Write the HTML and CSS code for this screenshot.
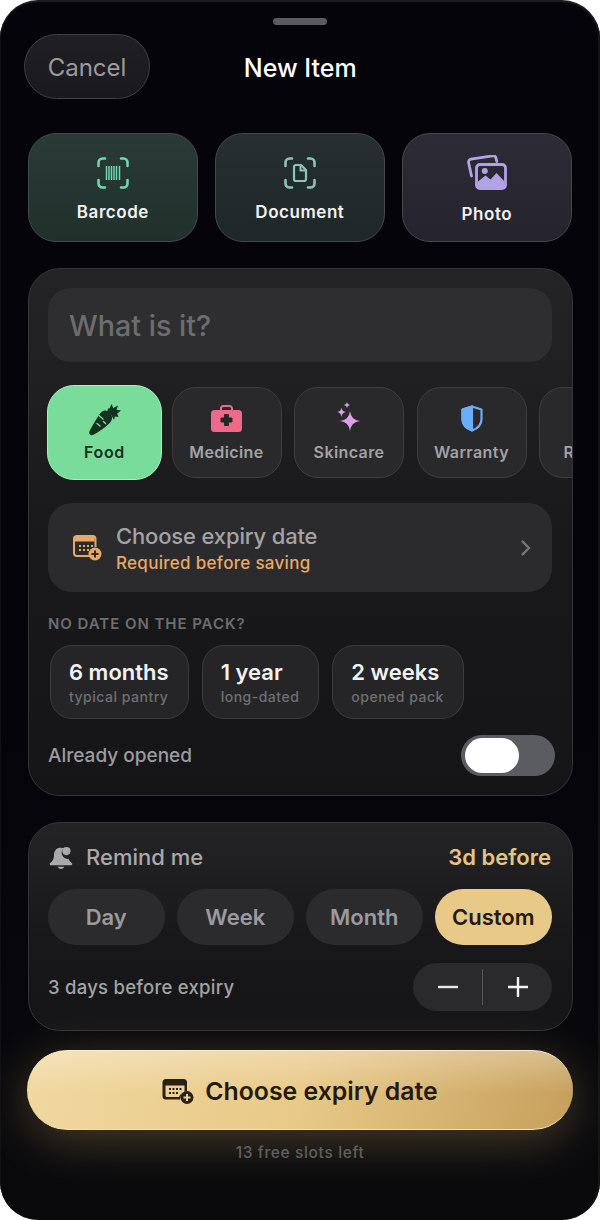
FILE: index.html
```html
<!DOCTYPE html>
<html lang="en">
<head>
  <meta charset="UTF-8" />
  <meta name="viewport" content="width=device-width, initial-scale=1.0" />
  <title>New Item</title>
  <link rel="stylesheet" href="styles.css">
</head>
<body>
  <div class="sheet">
    <div class="handle"></div>

    <header class="topbar">
      <button class="cancel">Cancel</button>
      <h1>New Item</h1>
      <span class="topbar-spacer"></span>
    </header>

    <div class="quick">
      <button class="quick-card green">
        <svg class="quick-icon" width="34" height="34" viewBox="0 0 34 34" fill="none" stroke="#6fd8b0" stroke-width="2.6" stroke-linecap="round" stroke-linejoin="round">
          <path d="M9 2.500H6.500a4 4 0 0 0-4 4V10M25 2.500h2.500a4 4 0 0 1 4 4V10M9 31.500H6.500a4 4 0 0 1-4-4V24M25 31.500h2.500a4 4 0 0 0 4-4V24"/>
          <path stroke-width="1.5" stroke-linecap="butt" d="M10.500 10v14M13 10v14M15.500 10v14M18 10v14M20.500 10v14M23.500 10v14"/>
        </svg>
        <span>Barcode</span>
      </button>
      <button class="quick-card teal">
        <svg class="quick-icon" width="34" height="34" viewBox="0 0 34 34" fill="none" stroke="#8ac5bb" stroke-width="2.600" stroke-linecap="round" stroke-linejoin="round">
          <path d="M9 2.500H6.500a4 4 0 0 0-4 4V10M25 2.500h2.500a4 4 0 0 1 4 4V10M9 31.500H6.500a4 4 0 0 1-4-4V24M25 31.500h2.500a4 4 0 0 0 4-4V24"/>
          <path stroke-width="2.200" d="M11 11a2 2 0 0 1 2-2h5l5 5v9a2 2 0 0 1-2 2h-8a2 2 0 0 1-2-2z"/>
          <path stroke-width="2" d="M17.500 9.500v5h5"/>
        </svg>
        <span>Document</span>
      </button>
      <button class="quick-card violet">
        <svg class="photo-icon" width="42" height="36" viewBox="0 0 42 36" fill="none">
          <path d="M5.500 21 2.600 7.800a3 3 0 0 1 2.300-3.600L26.500.9a3 3 0 0 1 3.500 2.200l.8 3.400" stroke="#b3a2e6" stroke-width="2.800" stroke-linecap="round"/>
          <rect x="10.500" y="9.500" width="29" height="24" rx="3.500" stroke="#b3a2e6" stroke-width="2.800"/>
          <path d="M12 31.500v-5l7.500-6 5 4 6-6.500 7.500 8v5.500a1.500 1.500 0 0 1-1.500 1.500h-23a1.500 1.500 0 0 1-1.500-1.500z" fill="#b3a2e6"/>
          <circle cx="18.800" cy="16" r="3" fill="#b3a2e6"/>
        </svg>
        <span>Photo</span>
      </button>
    </div>

    <section class="panel details">
      <div class="name-input">What is it?</div>

      <div class="cats">
        <button class="cat selected">
          <svg width="34" height="33" viewBox="0 0 34 33" fill="#14321f">
            <path d="M2.800 32C1 31 .8 29.500 1.800 27.500 5 21.500 8.500 15.500 12 10.500 13.500 8.500 15.500 7 18 7.500l4 2.500 2 3.500c.5 2.500-.7 5-2.500 6.800C16 25.500 10 29.500 5.500 31.700c-1 .5-1.900.7-2.700.3z"/>
            <path d="M19 8.500 20.500 5l1 .5L23.500 1l1.800 4L30 2.500l-1.500 4.300L33 7.500l-3.800 3.300 1.300 3.200-3.500-.5-1 3.500-2.500-4.500-2-2z"/>
            <path d="M11 12.500l4 3.500M9 20.500l3 2.500M15.500 18.500l2 2" fill="none" stroke="#7adc9a" stroke-width="1.400" stroke-linecap="round"/>
          </svg>
          <span>Food</span>
        </button>
        <button class="cat">
          <svg width="31" height="27" viewBox="0 0 31 27">
            <path d="M10 6V3.500A2.500 2.500 0 0 1 12.500 1h6A2.500 2.500 0 0 1 21 3.500V6" fill="none" stroke="#f0688a" stroke-width="2"/>
            <rect y="5" width="31" height="22" rx="3.500" fill="#f0688a"/>
            <path d="M13.500 9.500h4v3.500H21v4h-3.500v3.500h-4V17H10v-4h3.500z" fill="#27272a" stroke="#27272a" stroke-width="1" stroke-linejoin="round"/>
          </svg>
          <span>Medicine</span>
        </button>
        <button class="cat">
          <svg width="26" height="30" viewBox="0 0 26 30" fill="#dc9de9">
            <path d="M14 9Q15 18 24 19 15 20 14 29 13 20 4 19 13 18 14 9z"/>
            <path d="M5.500 5.500Q6 9.500 10 10 6 10.500 5.500 15 5 10.500 1 10 5 9.500 5.500 5.500z"/>
            <path d="M11 0Q11.300 2.700 14 3 11.300 3.300 11 6 10.700 3.300 8 3 10.700 2.700 11 0z"/>
          </svg>
          <span>Skincare</span>
        </button>
        <button class="cat">
          <svg width="24" height="27" viewBox="0 0 24 27">
            <path d="M12 1.500 21.500 4.500v9.500c0 5.500-4 9.500-9.500 11.500C6.500 23.500 2.500 19.500 2.500 14V4.500z" fill="none" stroke="#6aaef7" stroke-width="2.200" stroke-linejoin="round"/>
            <path d="M12 1.500v24C6.500 23.500 2.500 19.500 2.500 14V4.500z" fill="#6aaef7" stroke="#6aaef7" stroke-width="2.200" stroke-linejoin="round"/>
          </svg>
          <span>Warranty</span>
        </button>
        <button class="cat">
          <svg width="24" height="27" viewBox="0 0 24 27"></svg>
          <span>Receipt</span>
        </button>
      </div>

      <button class="date-row">
        <svg class="cal" width="29" height="26" viewBox="0 0 29 26">
          <path d="M17 21H4a3 3 0 0 1-3-3V4a3 3 0 0 1 3-3h15.500a3 3 0 0 1 3 3v8" fill="none" stroke="#e8a866" stroke-width="2"/>
          <path d="M2 2h19.500v4.500H2z" fill="#e8a866"/>
          <path d="M6 10h2v2H6zM10 10h2v2h-2zM14 10h2v2h-2zM18 10h2v2h-2zM6 14h2v2H6zM10 14h2v2h-2zM14 14h2v2h-2z" fill="#e8a866"/>
          <circle cx="22" cy="19" r="6.500" fill="#e8a866"/>
          <path d="M22 15.500v7M18.500 19h7" stroke="#2a2a2d" stroke-width="2"/>
        </svg>
        <span class="date-text">
          <span class="date-title">Choose expiry date</span>
          <span class="date-sub">Required before saving</span>
        </span>
        <svg class="chevron" width="12" height="18" viewBox="0 0 12 18" fill="none" stroke="#77777b" stroke-width="2.400" stroke-linecap="round" stroke-linejoin="round">
          <path d="M2.500 2.500 9 9l-6.500 6.500"/>
        </svg>
      </button>

      <h2 class="section-label">NO DATE ON THE PACK?</h2>

      <div class="chips">
        <button class="chip"><b>6 months</b><small>typical pantry</small></button>
        <button class="chip"><b>1 year</b><small>long-dated</small></button>
        <button class="chip"><b>2 weeks</b><small>opened pack</small></button>
      </div>

      <div class="opened-row">
        <span>Already opened</span>
        <div class="toggle"><div class="thumb"></div></div>
      </div>
    </section>

    <section class="panel remind">
      <div class="remind-head">
        <svg class="bell" width="26" height="26" viewBox="0 0 24 24" fill="#a9a9ab">
          <path d="M11 3.500c-3.600.5-5.500 3.300-5.500 6.800 0 3.500-1 5.300-3.500 7.200-.8.600-.5 2 .6 2h18.800c1.100 0 1.400-1.400.6-2-1.600-1.200-2.500-2.300-3-3.800-3.600.6-7-2.900-6.300-6.500.2-1.300.8-2.500 1.700-3.300-.7-.3-2-.6-3.400-.4z"/>
          <circle cx="17" cy="6.500" r="3.800"/>
          <path d="M9 21h6c-.4 1.300-1.600 2-3 2s-2.600-.7-3-2z"/>
        </svg>
        <span class="remind-title">Remind me</span>
        <span class="remind-value">3d before</span>
      </div>

      <div class="segs">
        <button class="seg">Day</button>
        <button class="seg">Week</button>
        <button class="seg">Month</button>
        <button class="seg active">Custom</button>
      </div>

      <div class="stepper-row">
        <span>3 days before expiry</span>
        <div class="stepper">
          <button aria-label="Less"><svg width="20" height="20" viewBox="0 0 20 20" stroke="#e8e8ea" stroke-width="2.400"><path d="M0 10h20"/></svg></button>
          <i></i>
          <button aria-label="More"><svg width="20" height="20" viewBox="0 0 20 20" stroke="#f2f2f4" stroke-width="2.400"><path d="M0 10h20M10 0v20"/></svg></button>
        </div>
      </div>
    </section>

    <button class="cta">
      <svg width="32" height="26" viewBox="0 0 32 26">
        <path d="M4 1h17.500a3.500 3.500 0 0 1 3.500 3.500V13a9 9 0 0 0-7 8.500H4a3.500 3.500 0 0 1-3.500-3.500V4.500A3.500 3.500 0 0 1 4 1z" fill="#2a2015"/>
        <path d="M3.500 7.500h19V14c-3 1-4.800 3-5.500 5H5a1.500 1.500 0 0 1-1.500-1.500z" fill="#ecd095"/>
        <path d="M7 10h2v2H7zM10.500 10h2v2h-2zM14 10h2v2h-2zM17.500 10h2v2h-2zM7 14h2v2H7zM10.500 14h2v2h-2zM14 14h2v2h-2z" fill="#2a2015"/>
        <circle cx="25" cy="19.500" r="6.500" fill="#2a2015"/>
        <path d="M25 16v7M21.500 19.500h7" stroke="#ecd095" stroke-width="2"/>
      </svg>
      <span>Choose expiry date</span>
    </button>

    <p class="slots">13 free slots left</p>
  </div>
</body>
</html>
```

FILE: styles.css
```css
* { box-sizing: border-box; }
html, body { margin: 0; padding: 0; background: #fff; }
body { font-family: Inter, "Noto Sans", sans-serif; }
button { font-family: inherit; cursor: pointer; padding: 0; }

.sheet {
  width: 600px; height: 1220px; overflow: hidden;
  padding: 18px 27.500px 0;
  border-radius: 38px;
  border-top: 2px solid #1c1c1f;
  background: linear-gradient(#04040a, #04040a 60%, #0a0a0d);
  box-shadow: inset 1px 0 0 #111114, inset -2px 0 0 #141416;
  color: #fff;
}
.handle { width: 54px; height: 7px; margin: -2px auto 0; border-radius: 4px; background: #5a5a62; }

.topbar { display: flex; align-items: center; justify-content: space-between; margin: 9px 0 0 -3.500px; height: 65px; }
.topbar h1 { margin: 2px 0 0; font-size: 25px; line-height: 32px; font-weight: 500; }
.topbar-spacer { width: 122px; }
.cancel {
  width: 126px; height: 65px; padding-top: 1px; border-radius: 33px;
  background: linear-gradient(#1f1f24, #1a1a1e); border: 1px solid #3f3f44;
  color: #9b9b9f; font-size: 24px; font-weight: 400;
}

.quick { display: grid; grid-template-columns: repeat(3, 170.750px); gap: 16.250px; margin-top: 34px; }
.quick-card {
  height: 109px; border-radius: 28px; border: 1px solid #46494a;
  display: flex; flex-direction: column; align-items: center; justify-content: flex-start;
  color: #f2f2f2; font-size: 17px; font-weight: 600; letter-spacing: .55px;
}
.quick-card.green { background: linear-gradient(#2a3a36, #20302b); }
.quick-card.teal { background: linear-gradient(#272f30, #1e2829); }
.quick-card.violet { background: linear-gradient(#2c2b36, #24232e); }
.quick-icon { margin: 22px 0 12px; }
.photo-icon { margin: 21px 0 13px; }

.panel {
  margin-top: 26px; border-radius: 32px; padding: 19px 19.500px;
  border: 1px solid #343437;
  background: linear-gradient(#242427, #18181b 55%, #151518);
}
.details { width: 545px; height: 528px; overflow: hidden; }

.name-input {
  height: 74px; border-radius: 22px; padding: 1px 21px 0;
  background: #2e2e31;
  color: #6d6d70; font-size: 28.700px; font-weight: 500; line-height: 74px;
}

.cats { display: flex; align-items: center; gap: 12.500px; margin: 23px -19.500px 0 -1px; }
.cat {
  flex: 0 0 110px; height: 91px; border-radius: 24px;
  background: #29292c; border: 1px solid #3e3e41;
  display: flex; flex-direction: column; align-items: center; justify-content: flex-end; gap: 10px;
  padding-bottom: 15px;
  color: #a2a2a5; font-size: 16px; font-weight: 600; letter-spacing: .4px;
}
.cat.selected {
  flex-basis: 115px; height: 95px; margin-right: -3px; border-radius: 27px;
  background: #7adc9a; border-color: #a9eebd; color: #17301f;
  gap: 6px; padding-bottom: 17px; letter-spacing: .6px;
}

.date-row {
  display: flex; align-items: center; width: 504px; height: 89px; margin-top: 23px; padding: 0 20px 0 25px;
  border: 0; border-radius: 24px; background: #2b2b2e; text-align: left;
}
.date-text { flex: 1; display: flex; flex-direction: column; gap: 4px; margin-left: 14px; }
.date-title { color: #a3a3a6; font-size: 22px; font-weight: 500; letter-spacing: -.15px; }
.date-sub { color: #e8a866; font-size: 17px; font-weight: 500; letter-spacing: .3px; }

.section-label { margin: 23px 0 0; color: #6d6d70; font-size: 15px; line-height: 17px; font-weight: 600; letter-spacing: .95px; }

.chips { display: flex; gap: 13px; margin: 13px 0 0 2px; }
.chip {
  height: 74px; padding: 0 19px 0 18px; border-radius: 22px;
  background: #252528; border: 1px solid #3b3b3e;
  display: flex; flex-direction: column; align-items: flex-start; justify-content: center; gap: 3px;
}
.chip b { color: #f2f2f3; font-size: 22px; font-weight: 600; }
.chip small { color: #6f6f72; font-size: 14px; font-weight: 500; letter-spacing: .5px; }

.opened-row { display: flex; align-items: center; justify-content: space-between; margin: 16px -2.500px 0 0; color: #9c9c9f; font-size: 19px; font-weight: 500; }
.toggle { width: 94px; height: 41px; border-radius: 21px; padding: 3px 4px; background: #5b5b62; }
.thumb { width: 54px; height: 35px; border-radius: 18px; background: #fff; }

.remind { width: 545px; height: 209px; padding-top: 17px; }
.remind-head { display: flex; align-items: center; height: 34px; margin-left: 1px; }
.bell { margin-left: -1px; }
.remind-title { flex: 1; margin-left: 12px; color: #a9a9ab; font-size: 22px; font-weight: 500; }
.remind-value { margin-right: 1px; color: #e3c583; font-size: 22px; font-weight: 600; }

.segs { display: flex; gap: 12.500px; margin-top: 15px; }
.seg {
  width: 116.500px; height: 56px; border: 0; border-radius: 28px;
  background: #2b2b2e; color: #9b9b9e; font-size: 22px; font-weight: 600;
}
.seg.active { background: #e8c987; color: #241b0c; }

.stepper-row { display: flex; align-items: center; justify-content: space-between; margin-top: 18px; color: #a2a2a5; font-size: 18.500px; font-weight: 500; letter-spacing: .25px; }
.stepper { display: flex; align-items: center; width: 139px; height: 48px; border-radius: 24px; background: #2a2a2d; }
.stepper button { flex: 1; height: 48px; border: 0; background: none; display: flex; align-items: center; justify-content: center; }
.stepper i { width: 1px; height: 36px; background: #58585b; }

.cta {
  display: flex; align-items: center; justify-content: center; gap: 11px;
  width: 546px; height: 80px; margin: 19px 0 0 -.5px; padding-top: 1px;
  border: 0; border-radius: 40px;
  border-top: 1px solid #f7ecd0; border-bottom: 1px solid #f3e0ae;
  background:
    linear-gradient(rgba(255,255,255,.28), rgba(255,255,255,0) 55%),
    linear-gradient(100deg, #f0d8a0, #e8c987 50%, #c69f5c);
  box-shadow: 0 10px 50px rgba(214,174,104,.32);
  color: #241a0c; font-size: 24.800px; font-weight: 600;
}

.slots { margin: 14px 0 0; text-align: center; color: #606062; font-size: 15.500px; font-weight: 500; line-height: 18px; letter-spacing: .65px; }
```
